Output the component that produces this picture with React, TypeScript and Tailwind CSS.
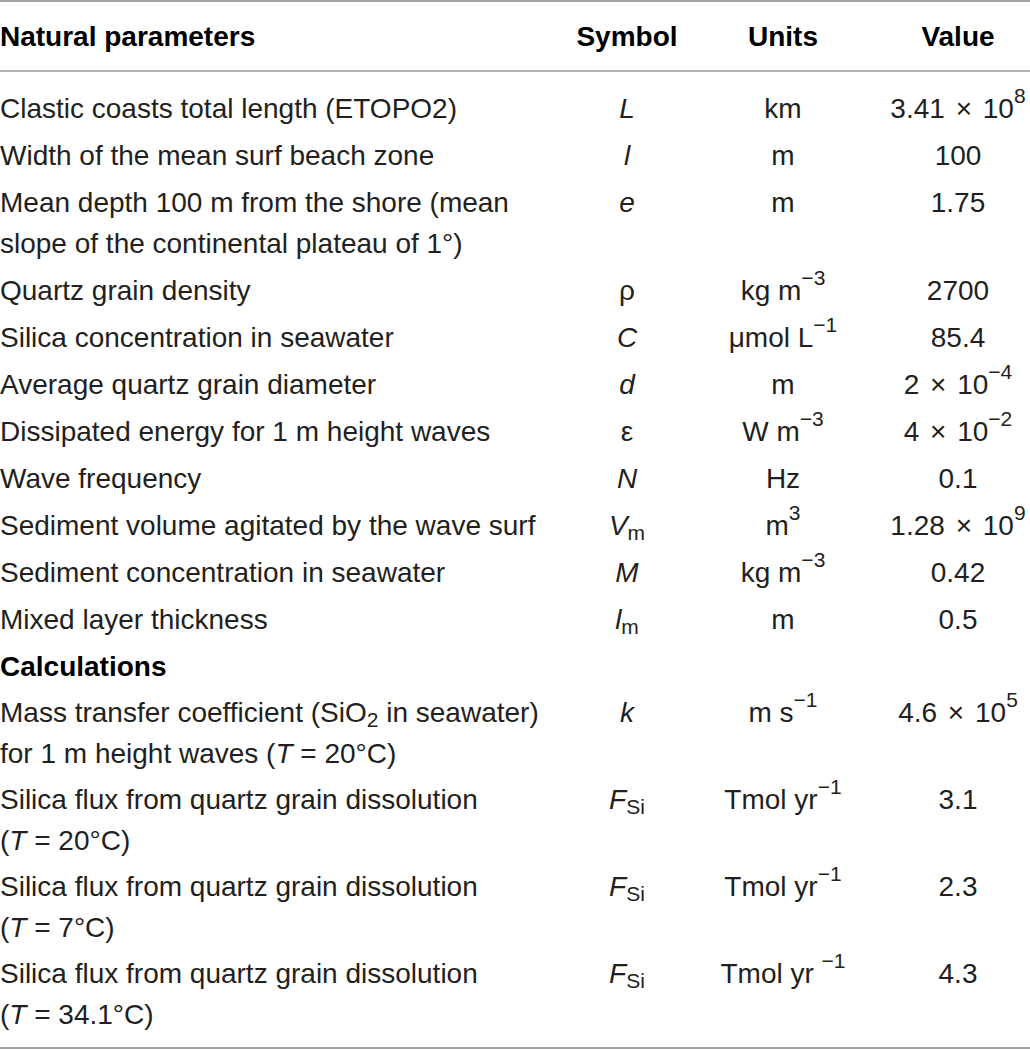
import type { ReactNode } from 'react';

interface RowProps {
  label: ReactNode;
  sym?: ReactNode;
  unit?: ReactNode;
  value?: ReactNode;
  pad?: string;
  bold?: boolean;
}

const MINUS = '\u2212';

function Sup({ children }: { children: ReactNode }) {
  return <sup className="text-[21px] -top-[0.7em]">{children}</sup>;
}

function Sub({ children }: { children: ReactNode }) {
  return <sub className="text-[21px] not-italic">{children}</sub>;
}

// a × 10^b with the wider gaps of the reference
function Sci({ a, exp }: { a: string; exp: string }) {
  return (
    <>
      {a}{' '}<span className="mx-[3px]">×</span>{' '}10<Sup>{exp}</Sup>
    </>
  );
}

function Row({ label, sym, unit, value, pad = 'pt-[3px] pb-[3px]', bold }: RowProps) {
  return (
    <tr>
      <td className={`${pad} align-top whitespace-nowrap ${bold ? 'font-bold text-black' : ''}`}>{label}</td>
      <td className={`${pad} align-top text-center`}>{sym}</td>
      <td className={`${pad} align-top text-center whitespace-nowrap`}>{unit}</td>
      <td className={`${pad} pl-[14px] align-top text-center whitespace-nowrap`}>{value}</td>
    </tr>
  );
}

export default function App() {
  return (
    <div className="w-[1030px] h-[1051px] bg-white">
      <table
        className="w-[1030px] table-fixed border-collapse border-t-2 border-b-2 border-[#a3a3a3] text-[28px] leading-[41px] text-[#231f20]"
        style={{ fontFamily: '"Liberation Sans", Arial, sans-serif' }}
      >
        <colgroup>
          <col className="w-[560px]" />
          <col className="w-[134px]" />
          <col className="w-[178px]" />
          <col className="w-[158px]" />
        </colgroup>
        <thead>
          <tr className="border-b-2 border-[#b3b3b3] text-black">
            <th className="h-[70px] text-left font-bold align-middle">Natural parameters</th>
            <th className="h-[70px] text-center font-bold align-middle">Symbol</th>
            <th className="h-[70px] text-center font-bold align-middle">Units</th>
            <th className="h-[70px] pl-[14px] text-center font-bold align-middle">Value</th>
          </tr>
        </thead>
        <tbody>
          <Row
            pad="pt-[16px] pb-[3px]"
            label="Clastic coasts total length (ETOPO2)"
            sym={<i>L</i>}
            unit="km"
            value={<Sci a="3.41" exp="8" />}
          />
          <Row label="Width of the mean surf beach zone" sym={<i>l</i>} unit="m" value="100" />
          <Row
            label={<>Mean depth 100 m from the shore (mean<br />slope of the continental plateau of 1°)</>}
            sym={<i>e</i>}
            unit="m"
            value="1.75"
          />
          <Row label="Quartz grain density" sym="ρ" unit={<>kg m<Sup>{MINUS}3</Sup></>} value="2700" />
          <Row label="Silica concentration in seawater" sym={<i>C</i>} unit={<>μmol L<Sup>{MINUS}1</Sup></>} value="85.4" />
          <Row label="Average quartz grain diameter" sym={<i>d</i>} unit="m" value={<Sci a="2" exp={`${MINUS}4`} />} />
          <Row
            label="Dissipated energy for 1 m height waves"
            sym="ε"
            unit={<>W m<Sup>{MINUS}3</Sup></>}
            value={<Sci a="4" exp={`${MINUS}2`} />}
          />
          <Row label="Wave frequency" sym={<i>N</i>} unit="Hz" value="0.1" />
          <Row
            label="Sediment volume agitated by the wave surf"
            sym={<><i>V</i><Sub>m</Sub></>}
            unit={<>m<Sup>3</Sup></>}
            value={<Sci a="1.28" exp="9" />}
          />
          <Row label="Sediment concentration in seawater" sym={<i>M</i>} unit={<>kg m<Sup>{MINUS}3</Sup></>} value="0.42" />
          <Row label="Mixed layer thickness" sym={<><i>l</i><Sub>m</Sub></>} unit="m" value="0.5" />
          <Row label="Calculations" bold />
          <Row
            pad="pt-[2px] pb-[3px]"
            label={<>Mass transfer coefficient (SiO<Sub>2</Sub> in seawater)<br />for 1 m height waves (<i>T</i> = 20°C)</>}
            sym={<i>k</i>}
            unit={<>m s<Sup>{MINUS}1</Sup></>}
            value={<Sci a="4.6" exp="5" />}
          />
          <Row
            pad="pt-[2px] pb-[3px]"
            label={<>Silica flux from quartz grain dissolution<br />(<i>T</i> = 20°C)</>}
            sym={<><i>F</i><Sub>Si</Sub></>}
            unit={<>Tmol yr<Sup>{MINUS}1</Sup></>}
            value="3.1"
          />
          <Row
            pad="pt-[2px] pb-[3px]"
            label={<>Silica flux from quartz grain dissolution<br />(<i>T</i> = 7°C)</>}
            sym={<><i>F</i><Sub>Si</Sub></>}
            unit={<>Tmol yr<Sup>{MINUS}1</Sup></>}
            value="2.3"
          />
          <Row
            pad="pt-[2px] pb-[12px]"
            label={<>Silica flux from quartz grain dissolution<br />(<i>T</i> = 34.1°C)</>}
            sym={<><i>F</i><Sub>Si</Sub></>}
            unit={<>Tmol yr <Sup>{MINUS}1</Sup></>}
            value="4.3"
          />
        </tbody>
      </table>
    </div>
  );
}
